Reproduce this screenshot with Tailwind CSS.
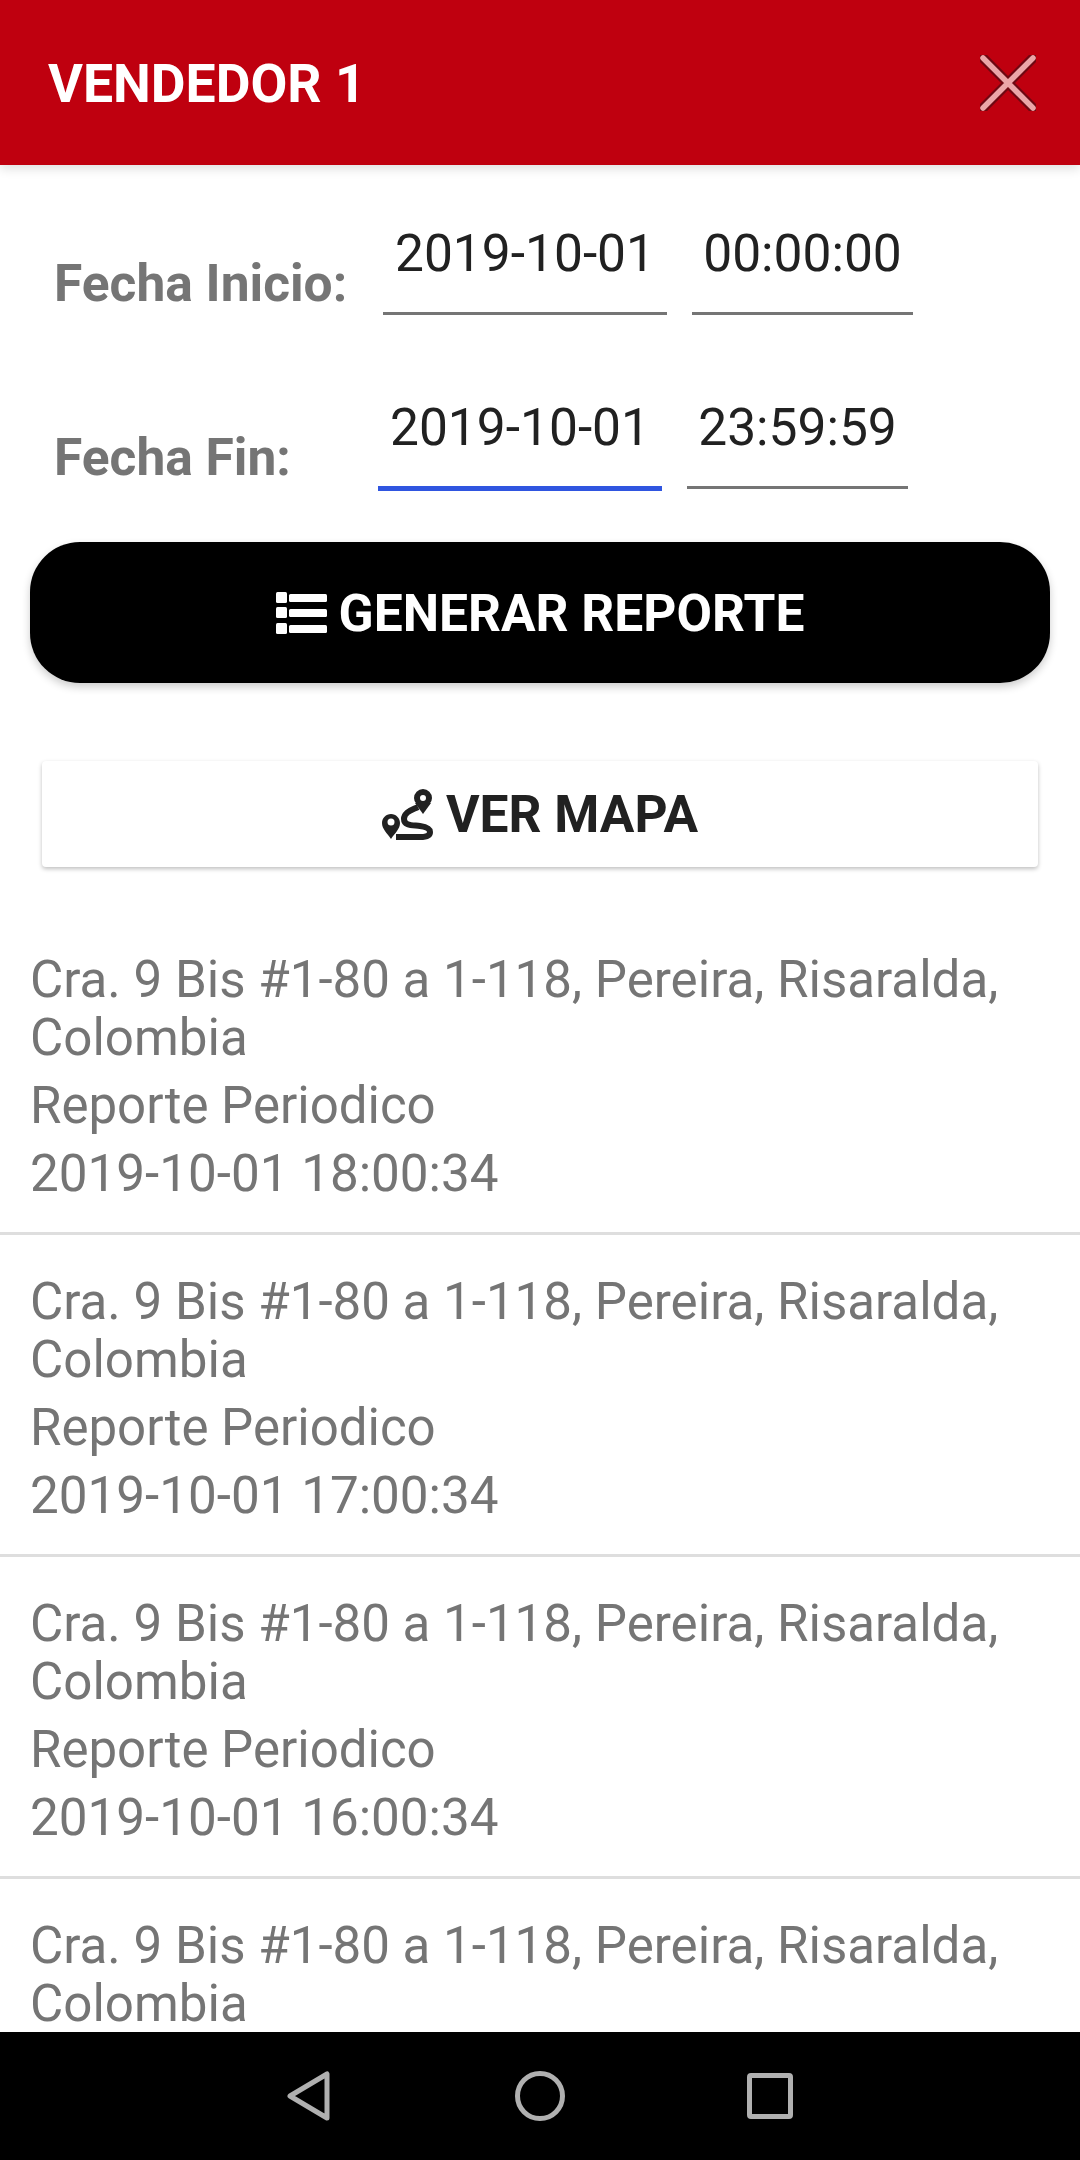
<!DOCTYPE html>
<html lang="en">
<head>
    <meta charset="UTF-8">
    <meta name="viewport" content="width=device-width, initial-scale=1.0">
    <script src="https://cdn.jsdelivr.net/npm/@tailwindcss/browser@4"></script>
    <title>Vendedor 1</title>
</head>
<body class="bg-white font-['Roboto',sans-serif]">
    <div class="flex flex-col h-[2160px] w-[1080px] overflow-hidden">
        <!-- Header -->
        <div class="flex justify-between items-center h-[165px] shrink-0 bg-[#bf000f] pl-[48px] pr-[44px] shadow-[0_4px_10px_rgba(0,0,0,0.12)] relative">
            <h1 class="pt-[2px] text-[53.5px] leading-[58px] font-bold text-white">VENDEDOR 1</h1>
            <svg width="56" height="56" viewBox="0 0 56 56" fill="none" stroke-linecap="round">
                <path d="M3 3L53 53M53 3L3 53" stroke="#6e0812" stroke-width="10"/>
                <path d="M3 3L53 53M53 3L3 53" stroke="#eba6a8" stroke-width="5.5"/>
            </svg>
        </div>

        <div class="flex-1 overflow-hidden">
            <!-- Dates -->
            <div class="flex items-start pl-[54px] mt-[59px]">
                <div class="w-[329px] mt-[31px] text-[51.5px] leading-[58px] font-bold text-[#757575]">Fecha Inicio:</div>
                <div class="w-[284px] h-[91px] pt-[1px] border-b-[3px] border-[#757575] text-center text-[51.5px] leading-[58px] text-[#212121]">2019-10-01</div>
                <div class="w-[221px] h-[91px] pt-[1px] ml-[25px] border-b-[3px] border-[#757575] text-center text-[51.5px] leading-[58px] text-[#212121]">00:00:00</div>
            </div>
            <div class="flex items-start pl-[54px] mt-[83px]">
                <div class="w-[324px] mt-[31px] text-[51.5px] leading-[58px] font-bold text-[#757575]">Fecha Fin:</div>
                <div class="w-[284px] h-[93px] pt-[1px] border-b-[5px] border-[#2f55e0] text-center text-[51.5px] leading-[58px] text-[#212121]">2019-10-01</div>
                <div class="w-[221px] h-[91px] pt-[1px] ml-[25px] border-b-[3px] border-[#757575] text-center text-[51.5px] leading-[58px] text-[#212121]">23:59:59</div>
            </div>

            <!-- Buttons -->
            <div class="flex items-center justify-center gap-[12px] h-[141px] mx-[30px] mt-[51px] bg-black rounded-[50px] shadow-[0_4px_8px_rgba(0,0,0,0.2)]">
                <svg width="51" height="42" viewBox="0 0 51 42" fill="white">
                    <rect x="0" y="0" width="11" height="11" rx="1.5"/>
                    <rect x="0" y="15" width="11" height="11" rx="1.5"/>
                    <rect x="0" y="31" width="11" height="11" rx="1.5"/>
                    <rect x="13" y="2" width="38" height="8" rx="1.5"/>
                    <rect x="13" y="17" width="38" height="8" rx="1.5"/>
                    <rect x="13" y="33" width="38" height="8" rx="1.5"/>
                </svg>
                <span class="pt-[2px] text-[51.5px] leading-[58px] font-bold text-white">GENERAR REPORTE</span>
            </div>
            <div class="flex items-center justify-center gap-[12px] h-[106px] mx-[42px] mt-[78px] bg-white rounded-[4px] shadow-[0_2px_4px_rgba(0,0,0,0.25)]">
                <svg width="52" height="52" viewBox="0 0 52 52" fill="none">
                    <path d="M36 19C30 22 22 24 22 31C22 38 31 37 38 38C45 39 48 41 48 44C48 48 44 49 38 49L14 49" stroke="#212121" stroke-width="6"/>
                    <circle cx="41" cy="10" r="6" stroke="#212121" stroke-width="6"/>
                    <path d="M33 15L41 26L49 15Z" fill="#212121"/>
                    <path d="M9 51C5 45 0 41 0 35C0 30 4 26 9 26C14 26 18 30 18 35C18 41 13 45 9 51Z" fill="#212121"/>
                    <circle cx="9" cy="34" r="3.5" fill="white"/>
                </svg>
                <span class="pt-[2px] text-[51.5px] leading-[58px] font-bold text-[#212121]">VER MAPA</span>
            </div>

            <!-- Report list -->
            <div id="reports" class="mt-[46px]"></div>
        </div>

        <!-- Android nav -->
        <div class="flex justify-center items-center h-[128px] shrink-0 bg-black">
            <svg width="44" height="50" viewBox="0 0 44 50" fill="none" stroke="#b0b0b0" stroke-width="5" stroke-linejoin="round">
                <path d="M40 3V47L3 25Z"/>
            </svg>
            <svg class="ml-[184px]" width="50" height="50" viewBox="0 0 50 50" fill="none" stroke="#b0b0b0" stroke-width="5">
                <circle cx="25" cy="25" r="22.5"/>
            </svg>
            <svg class="ml-[182px]" width="46" height="46" viewBox="0 0 46 46" fill="none" stroke="#b0b0b0" stroke-width="5" stroke-linejoin="round">
                <rect x="2.5" y="2.5" width="41" height="41" rx="1.5"/>
            </svg>
        </div>
    </div>

    <script>
        const reports = ["18:00:34", "17:00:34", "16:00:34", "15:00:34"];
        document.getElementById("reports").innerHTML = reports.map((time) => `
            <div class="pt-[38px] pb-[29px] px-[30px] border-b-[3px] border-[#dedede] text-[51px] leading-[58px] text-[#757575]">
                <p class="text-[51.1px]">Cra. 9 Bis #1-80 a 1-118, Pereira, Risaralda, Colombia</p>
                <p class="mt-[10px]">Reporte Periodico</p>
                <p class="mt-[10px] text-[51.2px]">2019-10-01 ${time}</p>
            </div>
        `).join("");
    </script>
</body>
</html>
